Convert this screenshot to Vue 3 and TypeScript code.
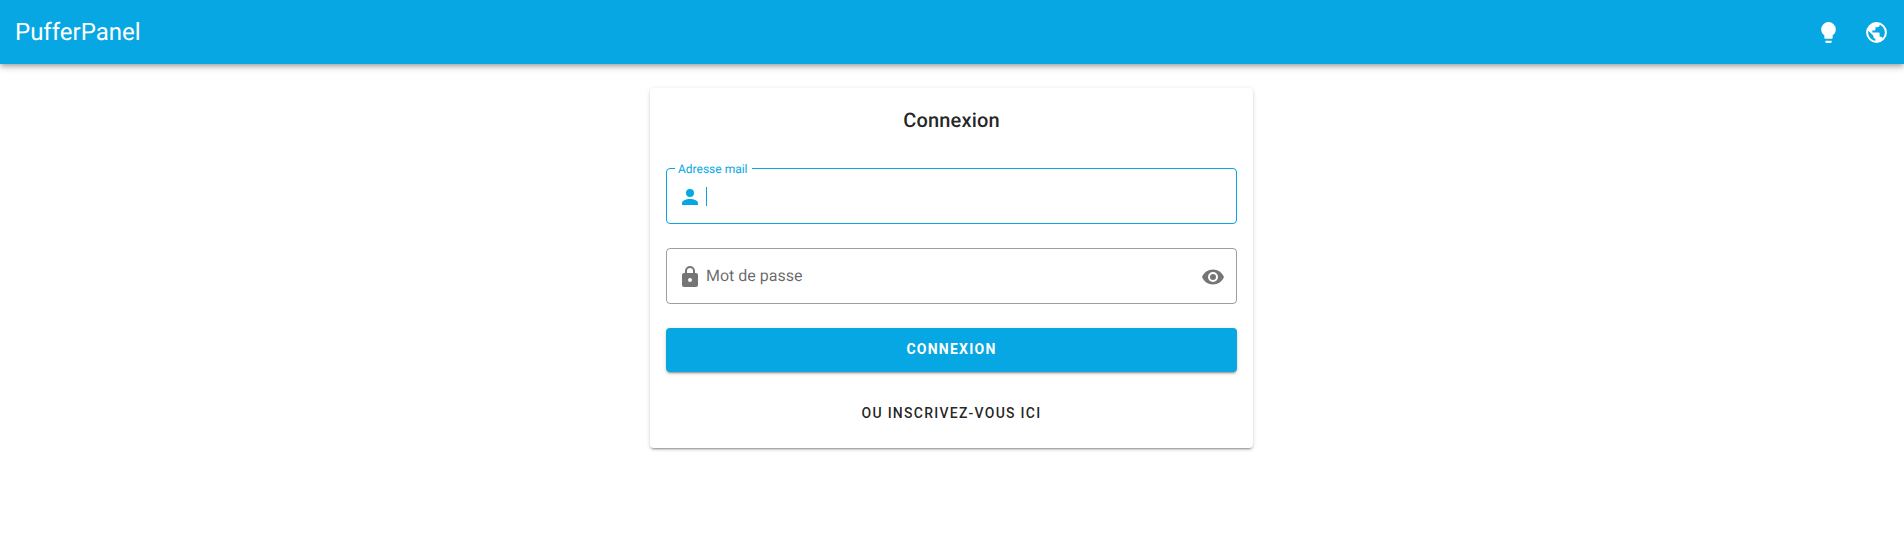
<script setup lang="ts">
const icons = {
  account: 'M12,4A4,4 0 0,1 16,8A4,4 0 0,1 12,12A4,4 0 0,1 8,8A4,4 0 0,1 12,4M12,14C16.42,14 20,15.79 20,18V20H4V18C4,15.79 7.58,14 12,14Z',
  lock: 'M12,17A2,2 0 0,0 14,15C14,13.89 13.1,13 12,13A2,2 0 0,0 10,15A2,2 0 0,0 12,17M18,8A2,2 0 0,1 20,10V20A2,2 0 0,1 18,22H6A2,2 0 0,1 4,20V10C4,8.89 4.9,8 6,8H7V6A5,5 0 0,1 12,1A5,5 0 0,1 17,6V8H18M12,3A3,3 0 0,0 9,6V8H15V6A3,3 0 0,0 12,3Z',
  eye: 'M12,9A3,3 0 0,0 9,12A3,3 0 0,0 12,15A3,3 0 0,0 15,12A3,3 0 0,0 12,9M12,17A5,5 0 0,1 7,12A5,5 0 0,1 12,7A5,5 0 0,1 17,12A5,5 0 0,1 12,17M12,4.5C7,4.5 2.73,7.61 1,12C2.73,16.39 7,19.5 12,19.5C17,19.5 21.27,16.39 23,12C21.27,7.61 17,4.5 12,4.5Z',
  bulb: 'M12,2A7,7 0 0,0 5,9C5,11.38 6.19,13.47 8,14.74V17A1,1 0 0,0 9,18H15A1,1 0 0,0 16,17V14.74C17.81,13.47 19,11.38 19,9A7,7 0 0,0 12,2M9,21A1,1 0 0,0 10,22H14A1,1 0 0,0 15,21V20H9V21Z',
  earth: 'M17.9,17.39C17.64,16.59 16.89,16 16,16H15V13A1,1 0 0,0 14,12H8V10H10A1,1 0 0,0 11,9V7H13A2,2 0 0,0 15,5V4.59C17.93,5.77 20,8.64 20,12C20,14.08 19.2,15.97 17.9,17.39M11,19.93C7.05,19.44 4,16.08 4,12C4,11.38 4.08,10.78 4.21,10.21L9,15V16A2,2 0 0,0 11,18M12,2A10,10 0 0,0 2,12A10,10 0 0,0 12,22A10,10 0 0,0 22,12A10,10 0 0,0 12,2Z'
}
</script>

<template>
  <div class="app">
    <header class="bar">
      <div class="brand">PufferPanel</div>
      <div class="bar-actions">
        <button class="icon-btn" aria-label="Thème"><svg viewBox="0 0 24 24" class="icon large"><path :d="icons.bulb" /></svg></button>
        <button class="icon-btn" aria-label="Langue"><svg viewBox="0 0 24 24" class="icon large"><path :d="icons.earth" /></svg></button>
      </div>
    </header>
    <main class="main">
      <section class="card">
        <h1 class="title">Connexion</h1>
        <div class="field focused">
          <fieldset class="outline"><legend>Adresse mail</legend></fieldset>
          <span class="float-label">Adresse mail</span>
          <svg viewBox="0 0 24 24" class="icon prepend"><path :d="icons.account" /></svg>
          <span class="caret"></span>
        </div>
        <div class="field">
          <fieldset class="outline"><legend class="empty"></legend></fieldset>
          <svg viewBox="0 0 24 24" class="icon prepend"><path :d="icons.lock" /></svg>
          <span class="placeholder">Mot de passe</span>
          <svg viewBox="0 0 24 24" class="icon append"><path :d="icons.eye" /></svg>
        </div>
        <button class="btn primary">Connexion</button>
        <button class="btn text">Ou inscrivez-vous ici</button>
      </section>
    </main>
  </div>
</template>

<style>
html, body { margin: 0; background: #fff; }
</style>

<style scoped>
.app {
  font-family: Roboto, "Liberation Sans", sans-serif; color: rgba(0,0,0,.87); min-height: 544px;
  text-rendering: geometricPrecision;
}
.bar {
  height: 64px; box-sizing: border-box; padding: 0 16px 0 15px;
  display: flex; align-items: center; justify-content: space-between;
  background: #07a7e3; color: #fff;
  box-shadow: 0 2px 4px -1px rgba(0,0,0,.2), 0 4px 5px 0 rgba(0,0,0,.14), 0 1px 10px 0 rgba(0,0,0,.12);
}
.brand { font-size: 24px; line-height: 32px; font-weight: 400; }
.bar-actions { display: flex; gap: 0; margin-right: -12px; }
.icon-btn {
  width: 48px; height: 48px; padding: 0; border: 0; background: none; color: #fff;
  display: flex; align-items: center; justify-content: center;
}
.icon { width: 24px; height: 24px; fill: currentColor; display: block; flex: none; margin-top: 2px; }
.large { width: 25px; height: 25px; margin-top: 0; }
.main { display: flex; justify-content: center; padding: 24px 1px 0 0; }
.card {
  width: 603px; height: 360px; box-sizing: border-box; padding: 16px;
  background: #fff; border-radius: 4px;
  display: flex; flex-direction: column;
  box-shadow: 0 3px 1px -2px rgba(0,0,0,.2), 0 2px 2px 0 rgba(0,0,0,.14), 0 1px 5px 0 rgba(0,0,0,.12);
}
.title { margin: 0 0 32px; height: 32px; font-size: 20px; line-height: 32px; font-weight: 500; letter-spacing: .15px; text-align: center; }
.field {
  position: relative; height: 56px; margin-bottom: 24px; padding: 0 12px;
  display: flex; align-items: center; color: rgba(0,0,0,.54);
}
.field.focused { color: #07a7e3; }
.outline {
  position: absolute; inset: -5px 0 0 0; margin: 0; padding: 0 8px;
  border: 1px solid rgba(0,0,0,.38); border-radius: 4px; pointer-events: none;
}
.focused .outline { border-color: #07a7e3; }
legend { padding: 0 4px 0 3px; font-size: 12px; line-height: 11px; height: 11px; color: transparent; white-space: nowrap; }
legend.empty { padding: 0; }
.float-label {
  position: absolute; left: 12px; top: -5px; font-size: 12px; line-height: 12px; color: #07a7e3;
}
.prepend { margin-right: 4px; }
.caret { width: 1px; height: 19px; background: #07a7e3; margin-top: 1px; }
.placeholder { flex: 1; font-size: 16px; line-height: 20px; color: rgba(0,0,0,.6); }
.btn {
  font-family: inherit; font-size: 14px; letter-spacing: 1.25px; text-transform: uppercase;
  border: 0; border-radius: 4px; cursor: pointer; display: block; width: 100%; padding: 0 0 2px;
}
.primary {
  height: 44px; color: #fff; background: #07a7e3; font-weight: 700;
  box-shadow: 0 3px 1px -2px rgba(0,0,0,.2), 0 2px 2px 0 rgba(0,0,0,.14), 0 1px 5px 0 rgba(0,0,0,.12);
}
.text { height: 36px; margin-top: 24px; color: rgba(0,0,0,.87); background: none; font-weight: 500; }
</style>
